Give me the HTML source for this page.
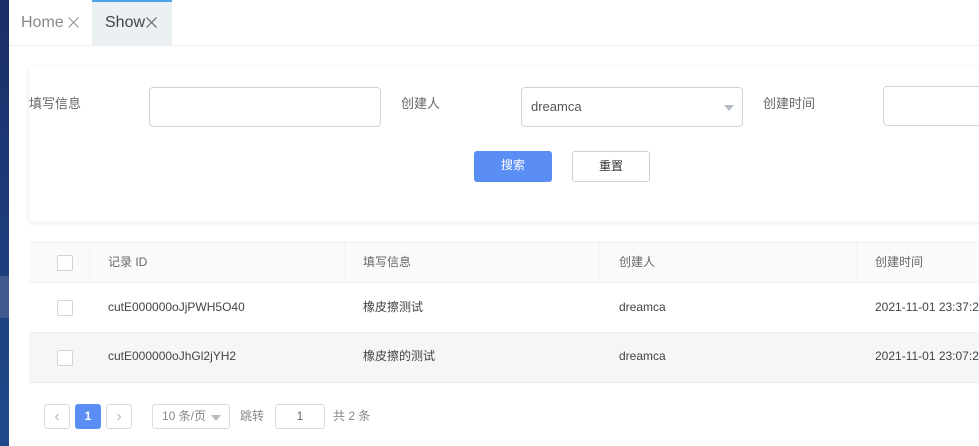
<!DOCTYPE html><html><head><style>
*{box-sizing:border-box;margin:0;padding:0}
body{width:979px;height:446px;overflow:hidden;background:#fff;font-family:"Liberation Sans","Noto Sans CJK SC",sans-serif;position:relative;color:#606266}
.sb{position:absolute;left:0;top:0;width:9px;height:446px;background:linear-gradient(#1c2d68,#1e4a8c)}
.sb i{position:absolute;left:0;top:276px;width:9px;height:42px;background:#40598f}
.tabs{position:absolute;left:9px;top:0;right:0;height:46px;border-bottom:1px solid #eceef2}
.tab{position:absolute;top:0;height:45px;font-size:16px}
.tab span{position:absolute;top:14px;line-height:18px}
.a{position:absolute;font-size:12px;line-height:16px}
.inp{position:absolute;border:1px solid #cfd3da;border-radius:4px;height:40px;background:#fff}
.card{position:absolute;left:29px;top:66px;width:960px;height:156px;box-shadow:0 1px 4px rgba(0,0,0,.1);border-radius:4px;background:#fff}
.btn{position:absolute;top:151px;width:78px;height:31px;border-radius:3px;font-size:12px;text-align:center;line-height:29px}
.row{position:absolute;left:29px;width:960px;border-bottom:1px solid #ebeef2;font-size:12px;color:#444}
.row div{line-height:16px}
.cb{position:absolute;left:28px;width:16px;height:16px;border:1px solid #d0d3da;border-radius:2px;background:#fff}
.pg{position:absolute;top:404px;height:25px;border:1px solid #d8dbe0;border-radius:3px;font-size:12px;text-align:center;line-height:23px;color:#888}
.vl{position:absolute;top:0;bottom:0;border-left:1px solid #f2f3f5}
</style></head><body>
<div class="sb"><i></i></div>
<div class="tabs">
<div class="tab" style="left:0;width:83px;color:#888"><span style="left:12px">Home</span><svg style="position:absolute;left:59px;top:17px" width="11" height="11"><path d="M0.5 0.5L10.5 10.5M10.5 0.5L0.5 10.5" stroke="#999" stroke-width="1.2"/></svg></div>
<div class="tab" style="left:83px;width:80px;background:#ebf0f3;border-top:2px solid #4aa3e8;color:#444"><span style="left:13px;top:12px">Show</span><svg style="position:absolute;left:54px;top:15px" width="11" height="11"><path d="M0.5 0.5L10.5 10.5M10.5 0.5L0.5 10.5" stroke="#666" stroke-width="1.2"/></svg></div>
</div>
<div class="card"></div>
<div class="a" style="left:29px;top:96px;color:#666;font-size:13px">填写信息</div>
<div class="inp" style="left:149px;top:87px;width:232px"></div>
<div class="a" style="left:401px;top:96px;color:#666;font-size:13px">创建人</div>
<div class="inp" style="left:521px;top:87px;width:222px;font-size:13px;line-height:38px;padding-left:9px;color:#555">dreamca<span style="position:absolute;right:8px;top:17px;border:5px solid transparent;border-top:6px solid #b4bac4;border-bottom:0"></span></div>
<div class="a" style="left:763px;top:96px;color:#666;font-size:13px">创建时间</div>
<div class="inp" style="left:883px;top:86px;width:120px"></div>
<div class="btn" style="left:474px;background:#5b8ef4;color:#fff">搜索</div>
<div class="btn" style="left:572px;border:1px solid #ccd0d6;color:#333">重置</div>
<div class="row" style="top:242px;height:41px;background:#fafafa;border-top:1px solid #ebeef2;color:#666">
<div class="cb" style="top:12px"></div>
<div class="vl" style="left:60px"></div>
<div style="position:absolute;left:79px;top:11px">记录 ID</div>
<div class="vl" style="left:315px"></div>
<div style="position:absolute;left:334px;top:11px">填写信息</div>
<div class="vl" style="left:570px"></div>
<div style="position:absolute;left:590px;top:11px">创建人</div>
<div class="vl" style="left:827px"></div>
<div style="position:absolute;left:846px;top:11px">创建时间</div>
</div>
<div class="row" style="top:283px;height:50px">
<div class="cb" style="top:17px"></div>
<div style="position:absolute;left:79px;top:16px">cutE000000oJjPWH5O40</div>
<div style="position:absolute;left:334px;top:16px">橡皮擦测试</div>
<div style="position:absolute;left:590px;top:16px">dreamca</div>
<div style="position:absolute;left:846px;top:16px">2021-11-01 23:37:2</div>
</div>
<div class="row" style="top:333px;height:50px;background:#f5f7f7;border-bottom-color:#e4e7ec">
<div class="cb" style="top:17px"></div>
<div style="position:absolute;left:79px;top:15px">cutE000000oJhGl2jYH2</div>
<div style="position:absolute;left:334px;top:15px">橡皮擦的测试</div>
<div style="position:absolute;left:590px;top:15px">dreamca</div>
<div style="position:absolute;left:846px;top:15px">2021-11-01 23:07:2</div>
</div>
<div class="pg" style="left:44px;width:26px;color:#bbb;font-size:16px">‹</div>
<div class="pg" style="left:75px;width:26px;background:#5b8ef4;border-color:#5b8ef4;color:#fff;font-weight:bold">1</div>
<div class="pg" style="left:106px;width:26px;color:#bbb;font-size:16px">›</div>
<div class="pg" style="left:152px;width:78px;text-align:left;padding-left:9px">10 条/页<span style="position:absolute;right:8px;top:10px;border:5px solid transparent;border-top:6px solid #b4bac4;border-bottom:0"></span></div>
<div class="a" style="left:240px;top:408px;color:#888">跳转</div>
<div class="pg" style="left:275px;width:50px;color:#666">1</div>
<div class="a" style="left:333px;top:408px;color:#888">共 2 条</div>
</body></html>
